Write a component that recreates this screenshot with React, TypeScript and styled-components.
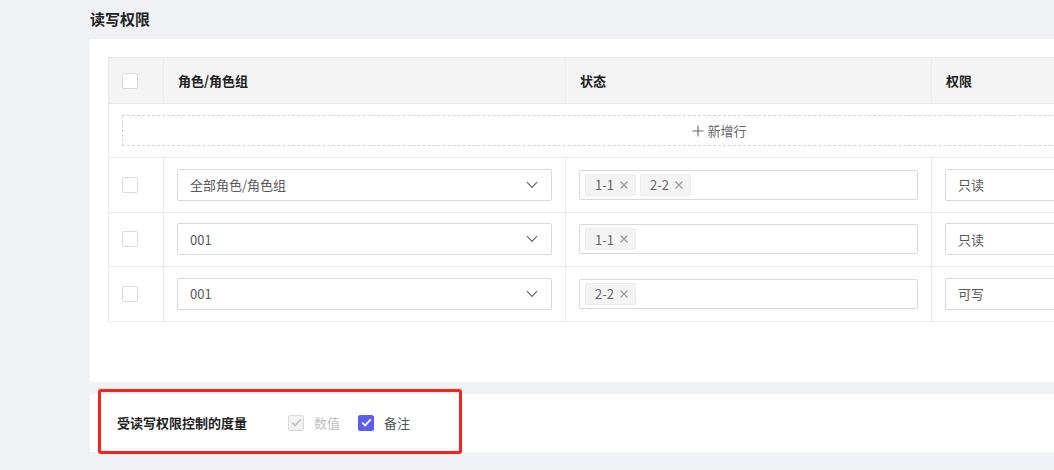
import React from "react";
import styled, { createGlobalStyle } from "styled-components";

const GlobalStyle = createGlobalStyle`
  html, body {
    margin: 0;
    padding: 0;
    background: #f0f1f5;
    overflow: hidden;
  }
  body {
    font-family: "Noto Sans CJK SC", "Noto Sans", "Liberation Sans", sans-serif;
    color: #333;
  }
  * { box-sizing: border-box; }
`;

const Page = styled.div`
  width: 1400px;
  height: 470px;
  padding-left: 90px;
  display: flex;
  flex-direction: column;
`;

const Title = styled.h2`
  margin: 0;
  padding-top: 9px;
  height: 39px;
  font-size: 15px;
  line-height: 20px;
  font-weight: 700;
  color: #222;
`;

const Panel = styled.section`
  background: #fff;
  padding: 18px 0 60px 18px;
`;

const Table = styled.div`
  width: 1222px;
  border-top: 1px solid #e9e9e9;
  border-left: 1px solid #e9e9e9;
  display: grid;
  grid-template-columns: 55px 402px 366px 399px;
`;

const HeadCell = styled.div<{ $pad?: number }>`
  height: 46px;
  background: #f4f4f4;
  border-right: 1px solid #ebebeb;
  border-bottom: 1px solid #e9e9e9;
  display: flex;
  align-items: center;
  padding-left: ${(p) => (p.$pad ?? 14)}px;
  font-size: 13px;
  font-weight: 600;
  color: #222;
`;

const Cell = styled.div<{ $pad?: number }>`
  height: 54.5px;
  border-right: 1px solid #ebebeb;
  border-bottom: 1px solid #e9e9e9;
  display: flex;
  align-items: center;
  padding: 0 13px;
  padding-left: ${(p) => (p.$pad ?? 13)}px;
`;

const AddCell = styled.div`
  grid-column: 1 / -1;
  height: 54px;
  border-right: 1px solid #ebebeb;
  border-bottom: 1px solid #e9e9e9;
  padding: 11px 13px 0 13px;
`;

const AddButton = styled.button`
  width: 100%;
  height: 31px;
  border: 1px dashed #d4d4d4;
  background: #fff;
  display: flex;
  align-items: center;
  justify-content: center;
  gap: 3px;
  font-family: inherit;
  font-size: 13px;
  color: #666;
  padding: 0;
  cursor: pointer;
`;

const Box = styled.span<{ $checked?: boolean; $disabled?: boolean }>`
  width: 16px;
  height: 16px;
  flex: none;
  border-radius: 2px;
  border: 1px solid
    ${(p) => (p.$checked && !p.$disabled ? "#5b5ef4" : "#d9d9d9")};
  background: ${(p) =>
    p.$checked ? (p.$disabled ? "#f2f2f2" : "#5b5ef4") : "#fff"};
  display: flex;
  align-items: center;
  justify-content: center;
`;

const Field = styled.div<{ $h?: number }>`
  width: 100%;
  height: ${(p) => p.$h ?? 32}px;
  border: 1px solid #d9d9d9;
  border-radius: 2px;
  background: #fff;
  display: flex;
  align-items: center;
  padding: 0 13px 0 12px;
  font-size: 13px;
  color: #595959;
`;

const FieldText = styled.span`
  flex: 1;
`;

const TagField = styled(Field)`
  padding: 0 5px;
  gap: 4px;
`;

const Tag = styled.span`
  height: 22px;
  display: inline-flex;
  align-items: center;
  gap: 6px;
  padding: 0 7px 0 9px;
  background: #f4f4f4;
  border: 1px solid #ececec;
  border-radius: 2px;
  font-size: 13px;
  color: #666;
`;

const Footer = styled.section`
  position: relative;
  margin-top: 12px;
  height: 58px;
  background: #fff;
  display: flex;
  align-items: center;
  padding-left: 27px;
`;

const Highlight = styled.div`
  position: absolute;
  left: 8px;
  top: -5px;
  width: 364px;
  height: 65px;
  border: 3px solid #fd1f1a;
  border-radius: 3px;
  pointer-events: none;
`;

const FooterLabel = styled.span`
  font-size: 13px;
  font-weight: 600;
  color: #222;
  margin-right: 41px;
`;

const CheckOption = styled.label<{ $disabled?: boolean }>`
  display: inline-flex;
  align-items: center;
  gap: 10px;
  margin-right: 18px;
  font-size: 13px;
  color: ${(p) => (p.$disabled ? "#bdbdbd" : "#555")};
`;

const Check = ({ color }: { color: string }) => (
  <svg width="11" height="9" viewBox="0 0 11 9">
    <path d="M1.2 4.6 L4.2 7.4 L9.8 1.4" fill="none" stroke={color} strokeWidth="1.8" />
  </svg>
);

const Chevron = () => (
  <svg width="12" height="8" viewBox="0 0 12 8">
    <path d="M1 1.2 L6 6.4 L11 1.2" fill="none" stroke="#666" strokeWidth="1.2" />
  </svg>
);

const Close = () => (
  <svg width="8" height="8" viewBox="0 0 8 8">
    <path d="M0.5 0.5 L7.5 7.5 M7.5 0.5 L0.5 7.5" stroke="#999" strokeWidth="1.1" />
  </svg>
);

const Plus = () => (
  <svg width="12" height="12" viewBox="0 0 12 12">
    <path d="M6 0.5 V11.5 M0.5 6 H11.5" stroke="#666" strokeWidth="1.1" />
  </svg>
);

const rows = [
  { role: "全部角色/角色组", tags: ["1-1", "2-2"], perm: "只读" },
  { role: "001", tags: ["1-1"], perm: "只读" },
  { role: "001", tags: ["2-2"], perm: "可写" },
];

export default function App() {
  return (
    <>
      <GlobalStyle />
      <Page>
        <Title>读写权限</Title>
        <Panel>
          <Table>
            <HeadCell $pad={13}>
              <Box />
            </HeadCell>
            <HeadCell>角色/角色组</HeadCell>
            <HeadCell>状态</HeadCell>
            <HeadCell>权限</HeadCell>
            <AddCell>
              <AddButton>
                <Plus />
                新增行
              </AddButton>
            </AddCell>
            {rows.map((r, i) => (
              <React.Fragment key={i}>
                <Cell>
                  <Box />
                </Cell>
                <Cell>
                  <Field>
                    <FieldText>{r.role}</FieldText>
                    <Chevron />
                  </Field>
                </Cell>
                <Cell>
                  <TagField $h={30}>
                    {r.tags.map((t) => (
                      <Tag key={t}>
                        {t}
                        <Close />
                      </Tag>
                    ))}
                  </TagField>
                </Cell>
                <Cell>
                  <Field>
                    <FieldText>{r.perm}</FieldText>
                  </Field>
                </Cell>
              </React.Fragment>
            ))}
          </Table>
        </Panel>
        <Footer>
          <Highlight />
          <FooterLabel>受读写权限控制的度量</FooterLabel>
          <CheckOption $disabled>
            <Box $checked $disabled>
              <Check color="#c4c4c4" />
            </Box>
            数值
          </CheckOption>
          <CheckOption>
            <Box $checked>
              <Check color="#fff" />
            </Box>
            备注
          </CheckOption>
        </Footer>
      </Page>
    </>
  );
}
